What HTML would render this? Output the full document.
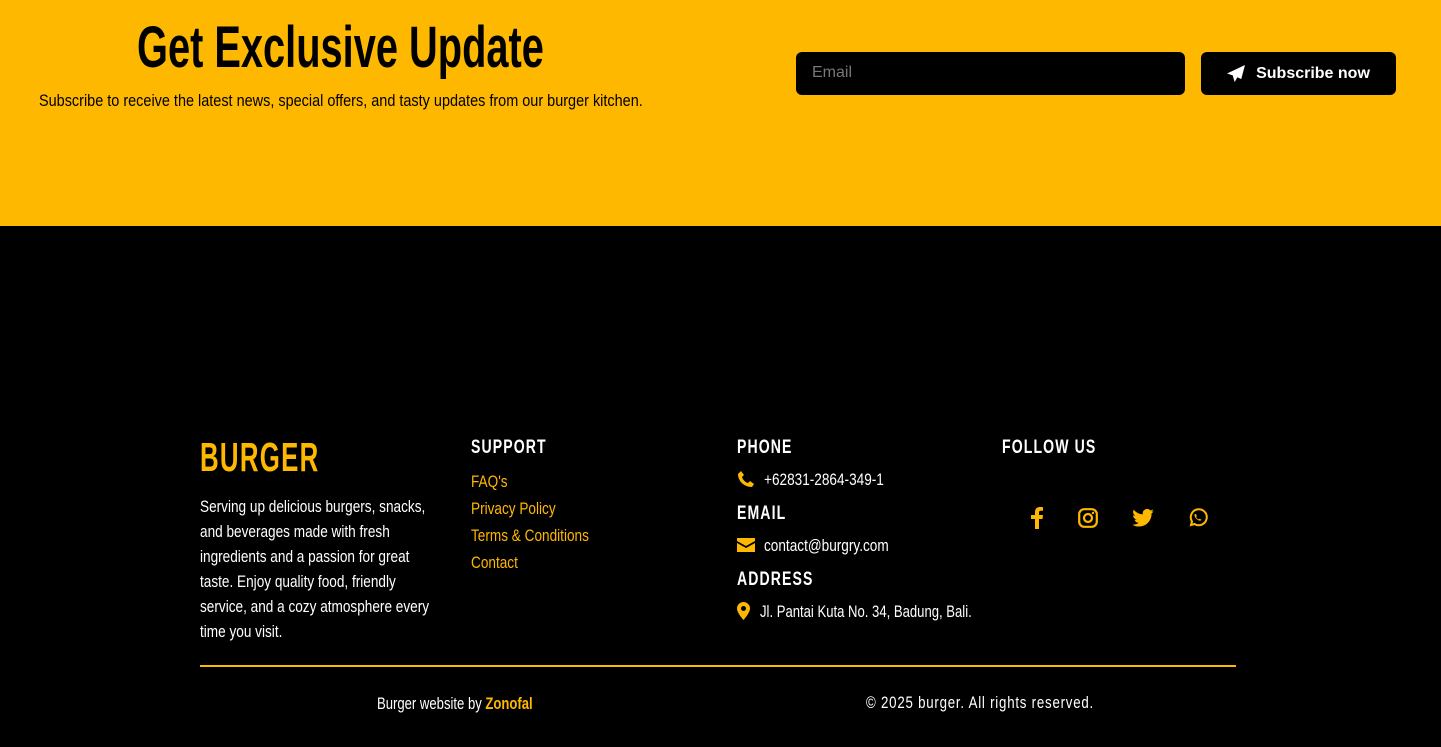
<!DOCTYPE html>
<html><head><meta charset="utf-8"><style>
*{margin:0;padding:0;box-sizing:border-box}
body{width:1441px;height:747px;overflow:hidden;background:#000;font-family:"Liberation Sans",Arial,sans-serif;color:#fff;position:relative}
.top{position:absolute;left:0;top:0;width:1441px;height:226px;background:#FFB800}
.abs{position:absolute;white-space:nowrap;transform-origin:0 0}
.y{color:#FFB800}
.h{font-size:19px;font-weight:bold;letter-spacing:1.5px;transform:scaleX(.74)}
.t{font-size:17px;transform:scaleX(.8)}
svg{display:block}
</style></head><body>
<div class="top"></div>
<div class="abs" style="left:137px;top:16px;font-size:58px;font-weight:bold;color:#000;line-height:1.1;transform:scaleX(.686)">Get Exclusive Update</div>
<div class="abs" style="left:39px;top:91px;color:#000;font-size:17px;transform:scaleX(.85)">Subscribe to receive the latest news, special offers, and tasty updates from our burger kitchen.</div>
<div class="abs" style="left:796px;top:52px;width:389px;height:43px;background:#000;border-radius:6px;color:#777;font-size:16px;padding:12px 16px">Email</div>
<div class="abs" style="left:1201px;top:52px;width:195px;height:43px;background:#000;border-radius:6px;font-weight:bold;font-size:16px;display:flex;align-items:center;justify-content:center;gap:10px">
<svg width="19" height="17" viewBox="0 0 20 18"><path d="M19 0L0 9l6 2 2 7 3-5 4 2z" fill="#fff"/></svg>Subscribe now</div>

<div class="abs y" style="left:200px;top:434px;font-size:41px;font-weight:bold;letter-spacing:2px;transform:scaleX(.63)">BURGER</div>
<div class="abs t" style="left:200px;top:494px;line-height:25px">Serving up delicious burgers, snacks,<br>and beverages made with fresh<br>ingredients and a passion for great<br>taste. Enjoy quality food, friendly<br>service, and a cozy atmosphere every<br>time you visit.</div>

<div class="abs h" style="left:471px;top:437px">SUPPORT</div>
<div class="abs t y" style="left:471px;top:468px;line-height:27px">FAQ's<br>Privacy Policy<br>Terms &amp; Conditions<br>Contact</div>

<div class="abs h" style="left:737px;top:437px">PHONE</div>
<svg class="abs" style="left:737px;top:470px" width="18" height="18" viewBox="0 0 18 18"><path d="M4 1l3 4-2 2c1 3 3 5 6 6l2-2 4 3-2 3C7 17 1 11 1 4z" fill="#FFB800"/></svg>
<div class="abs t" style="left:764px;top:470px">+62831-2864-349-1</div>
<div class="abs h" style="left:737px;top:503px">EMAIL</div>
<svg class="abs" style="left:737px;top:538px" width="18" height="14" viewBox="0 0 18 14"><path d="M0 0h18v3L9 8 0 3z M0 5l9 5 9-5v9H0z" fill="#FFB800"/></svg>
<div class="abs t" style="left:764px;top:536px">contact@burgry.com</div>
<div class="abs h" style="left:737px;top:569px">ADDRESS</div>
<svg class="abs" style="left:737px;top:602px" width="13" height="18" viewBox="0 0 13 18"><path d="M6.5 0A6.5 6.5 0 0 0 0 6.5C0 11 6.5 18 6.5 18S13 11 13 6.5A6.5 6.5 0 0 0 6.5 0zm0 4a2.5 2.5 0 1 1 0 5 2.5 2.5 0 0 1 0-5z" fill="#FFB800"/></svg>
<div class="abs t" style="left:760px;top:602px;transform:scaleX(.77)">Jl. Pantai Kuta No. 34, Badung, Bali.</div>

<div class="abs h" style="left:1002px;top:437px">FOLLOW US</div>
<svg class="abs" style="left:1031px;top:507px" width="13" height="22" viewBox="0 0 13 22"><path d="M8 22V12h3.5l.5-4H8V5.5C8 4.4 8.4 3.7 10 3.7h2V.2C11.6.1 10.4 0 9 0 6 0 4 1.8 4 5v3H0v4h4v10z" fill="#FFB800"/></svg>
<svg class="abs" style="left:1078px;top:508px" width="20" height="20" viewBox="0 0 20 20"><rect x="1.2" y="1.2" width="17.6" height="17.6" rx="5" fill="none" stroke="#FFB800" stroke-width="2.2"/><circle cx="10" cy="10" r="4" fill="none" stroke="#FFB800" stroke-width="2.2"/><circle cx="15" cy="5" r="1.2" fill="#FFB800"/></svg>
<svg class="abs" style="left:1132px;top:509px" width="22" height="18" viewBox="0 0 24 20"><path d="M24 2.4a10 10 0 0 1-2.8.8A5 5 0 0 0 23.3.4a10 10 0 0 1-3.1 1.2A4.9 4.9 0 0 0 11.8 6 14 14 0 0 1 1.7.9a4.9 4.9 0 0 0 1.5 6.6 4.9 4.9 0 0 1-2.2-.6 4.9 4.9 0 0 0 3.9 4.9 4.9 4.9 0 0 1-2.2.1 4.9 4.9 0 0 0 4.6 3.4A9.9 9.9 0 0 1 0 17.3 14 14 0 0 0 7.5 19.5c9 0 14-7.5 14-14v-.6A10 10 0 0 0 24 2.4z" fill="#FFB800"/></svg>
<svg class="abs" style="left:1188px;top:508px" width="20" height="20" viewBox="0 0 20 20"><path d="M3 17l1-3.5A8 8 0 1 1 6.5 16z" fill="none" stroke="#FFB800" stroke-width="2"/><path d="M7 6c-.5.5-.8 1.5 0 3s2.5 3 4 3.5 2-.2 2.5-.8l-2-1-1 .7c-1-.5-2-1.5-2.3-2.4l.6-1L8 6z" fill="#FFB800"/></svg>

<div class="abs" style="left:200px;top:665px;width:1036px;height:2px;background:#FFB800"></div>
<div class="abs t" style="left:377px;top:694px;transform:scaleX(.77)">Burger website by <b class="y">Zonofal</b></div>
<div class="abs t" style="left:866px;top:693px;letter-spacing:1px;transform:scaleX(.78)">© 2025 burger. All rights reserved.</div>
</body></html>
